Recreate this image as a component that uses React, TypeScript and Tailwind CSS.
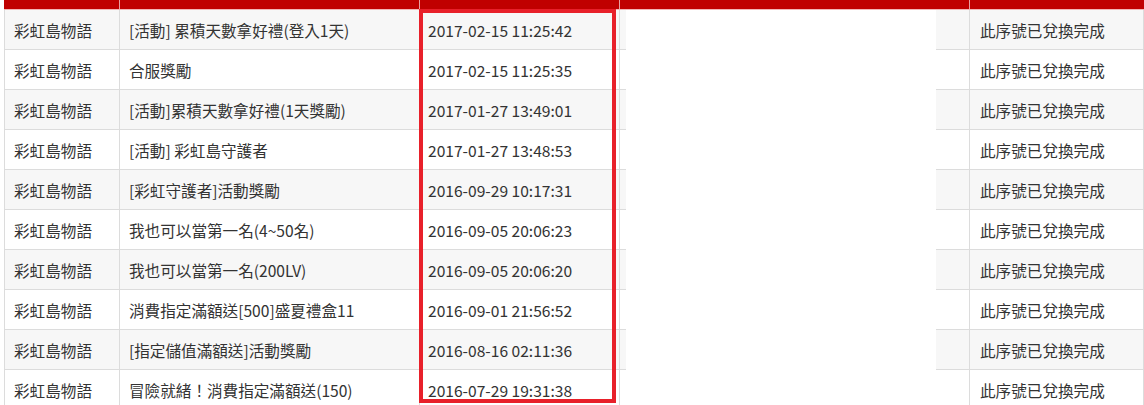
const rows = [
  { game: "彩虹島物語", name: "[活動] 累積天數拿好禮(登入1天)", time: "2017-02-15 11:25:42" },
  { game: "彩虹島物語", name: "合服獎勵", time: "2017-02-15 11:25:35" },
  { game: "彩虹島物語", name: "[活動]累積天數拿好禮(1天獎勵)", time: "2017-01-27 13:49:01" },
  { game: "彩虹島物語", name: "[活動] 彩虹島守護者", time: "2017-01-27 13:48:53" },
  { game: "彩虹島物語", name: "[彩虹守護者]活動獎勵", time: "2016-09-29 10:17:31" },
  { game: "彩虹島物語", name: "我也可以當第一名(4~50名)", time: "2016-09-05 20:06:23" },
  { game: "彩虹島物語", name: "我也可以當第一名(200LV)", time: "2016-09-05 20:06:20" },
  { game: "彩虹島物語", name: "消費指定滿額送[500]盛夏禮盒11", time: "2016-09-01 21:56:52" },
  { game: "彩虹島物語", name: "[指定儲值滿額送]活動獎勵", time: "2016-08-16 02:11:36" },
  { game: "彩虹島物語", name: "冒險就緒！消費指定滿額送(150)", time: "2016-07-29 19:31:38" },
];

const font = { fontFamily: '"Noto Sans CJK TC", "Noto Sans", sans-serif' };

function App() {
  return (
    <div className="relative w-[1144px] h-[405px] overflow-hidden bg-white text-[15.6px] leading-[20px] text-[#333]" style={font}>
      <div className="ml-[4px] w-[1140px]">
        {/* header strip, mostly cut off */}
        <div className="flex h-[10px] bg-[#c00000] border-b border-[#f3b5b5]">
          <div className="w-[116px] border-r border-[#e8a0a0]" />
          <div className="w-[300px] border-r border-[#e8a0a0]" />
          <div className="w-[200px] border-r border-[#e8a0a0]" />
          <div className="w-[350px] border-r border-[#e8a0a0]" />
          <div className="flex-1" />
        </div>

        {rows.map((r, i) => {
          const bg = i % 2 === 0 ? "bg-[#f7f7f7]" : "bg-white";
          return (
            <div key={i} className="flex h-[40px] border-l border-r border-[#dcdcdc]">
              <div className={`w-[115px] flex items-center pl-[9px] border-b border-r border-[#dcdcdc] ${bg}`}>{r.game}</div>
              <div className={`w-[300px] flex items-center pl-[9px] border-b border-r border-[#dcdcdc] ${bg}`}>{r.name}</div>
              <div className={`w-[200px] flex items-center pl-[8px] border-b border-r border-[#dcdcdc] ${bg}`}>{r.time}</div>
              <div className="w-[350px] flex border-r border-[#dcdcdc]">
                <div className={`w-[6px] border-b border-[#dcdcdc] ${bg}`} />
                <div className="w-[310px] bg-white" />
                <div className={`flex-1 border-b border-[#dcdcdc] ${bg}`} />
              </div>
              <div className={`flex-1 flex items-center pl-[10px] border-b border-[#dcdcdc] ${bg}`}>此序號已兌換完成</div>
            </div>
          );
        })}
      </div>

      {/* highlight box around the time column */}
      <div className="absolute left-[419px] top-[9px] w-[197px] h-[394px] border-4 border-[#e8202a]" />
    </div>
  );
}

export default App;
